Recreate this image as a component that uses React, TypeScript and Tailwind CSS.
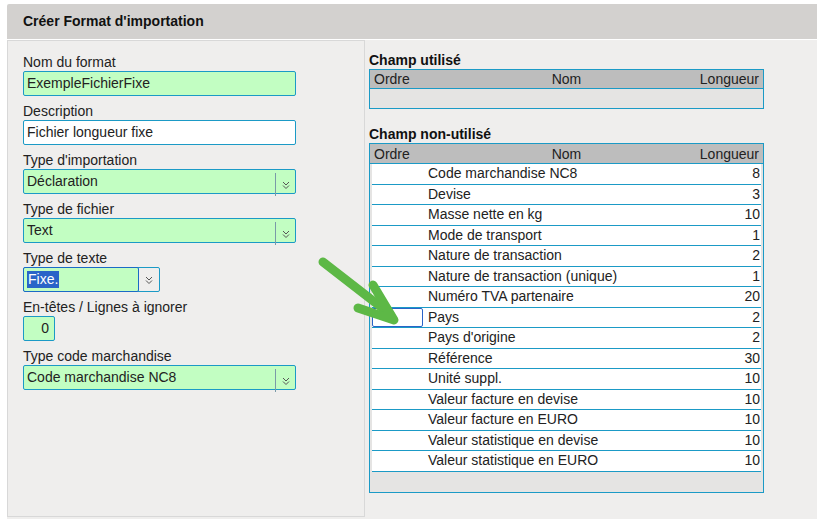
import React from "react";

const rows: [string, number][] = [
  ["Code marchandise NC8", 8],
  ["Devise", 3],
  ["Masse nette en kg", 10],
  ["Mode de transport", 1],
  ["Nature de transaction", 2],
  ["Nature de transaction (unique)", 1],
  ["Numéro TVA partenaire", 20],
  ["Pays", 2],
  ["Pays d'origine", 2],
  ["Référence", 30],
  ["Unité suppl.", 10],
  ["Valeur facture en devise", 10],
  ["Valeur facture en EURO", 10],
  ["Valeur statistique en devise", 10],
  ["Valeur statistique en EURO", 10],
];

function Chev() {
  return (
    <div className="w-[20px] h-full flex items-center justify-center border-l border-[#7a9aa8] my-[3px]">
      <svg width="10" height="10" viewBox="0 0 10 10" fill="none" stroke="#555" strokeWidth="1">
        <path d="M2 2 L5 5 L8 2 M2 5.5 L5 8.5 L8 5.5" />
      </svg>
    </div>
  );
}

function Field({ label, children }: { label: string; children: React.ReactNode }) {
  return (
    <div className="flex flex-col">
      <div className="h-[18px] leading-[18px] text-[14px] text-[#222]">{label}</div>
      {children}
    </div>
  );
}

function Sel({ value, w }: { value: string; w: string }) {
  return (
    <div className={`${w} h-[25px] bg-[#c2fec2] border border-[#1b9ac6] rounded-[2px] flex items-stretch`}>
      <div className="flex-1 flex items-center pl-[3px]">
        <span>{value}</span>
      </div>
      <Chev />
    </div>
  );
}

export default function App() {
  return (
    <div className="w-[817px] h-[523px] bg-white relative overflow-hidden text-[14px] text-[#222]" style={{ fontFamily: '"Liberation Sans", Arial, sans-serif' }}>
      <div className="absolute left-[7px] right-0 top-[4px] h-[35px] bg-[#d3d1cf] rounded-tl-[2px] flex items-center pl-[16px] font-bold text-[14px] text-[#111]">
        Créer Format d'importation
      </div>
      <div className="absolute left-[7px] right-0 top-[40px] bottom-[4px] bg-[#efeeed] flex">
        <div className="w-[358px] h-[477px] border border-[#d8d8d8] bg-[#efeeed] pt-[12px] pl-[15px] flex flex-col gap-[6px]">
          <Field label="Nom du format">
            <div className="w-[273px] h-[25px] bg-[#c2fec2] border border-[#1b9ac6] rounded-[2px] flex items-center pl-[3px]">ExempleFichierFixe</div>
          </Field>
          <Field label="Description">
            <div className="w-[273px] h-[25px] bg-white border border-[#1b9ac6] rounded-[2px] flex items-center pl-[3px]">Fichier longueur fixe</div>
          </Field>
          <Field label="Type d'importation">
            <Sel value="Déclaration" w="w-[273px]" />
          </Field>
          <Field label="Type de fichier">
            <Sel value="Text" w="w-[273px]" />
          </Field>
          <Field label="Type de texte">
            <div className="w-[137px] h-[25px] border border-[#1b9ac6] rounded-[2px] flex items-stretch bg-[#efeeed]">
              <div className="flex-1 bg-[#c2fec2] border border-[#1b6ac6] rounded-[2px] flex items-center pl-[3px] -m-[1px] mr-0">
                <span className="bg-[#2a64c8] text-white leading-[17px] px-[1px]">Fixe.</span>
              </div>
              <div className="w-[20px] flex items-center justify-center">
                <svg width="10" height="10" viewBox="0 0 10 10" fill="none" stroke="#555" strokeWidth="1">
                  <path d="M2 2 L5 5 L8 2 M2 5.5 L5 8.5 L8 5.5" />
                </svg>
              </div>
            </div>
          </Field>
          <Field label="En-têtes / Lignes à ignorer">
            <div className="w-[32px] h-[25px] bg-[#c2fec2] border border-[#1b9ac6] rounded-[2px] flex items-center justify-end pr-[5px]">0</div>
          </Field>
          <Field label="Type code marchandise">
            <Sel value="Code marchandise NC8" w="w-[273px]" />
          </Field>
        </div>
        <div className="pl-[4px] pt-[11px] flex flex-col">
          <div className="font-bold h-[18px] leading-[18px] text-[#111]">Champ utilisé</div>
          <div className="w-[395px] border border-[#1b9ac6] bg-[#e5e4e3]">
            <div className="h-[19px] bg-[#bdbdbd] border-b border-[#1b9ac6] grid grid-cols-[120px_1fr_120px] px-[4px] items-center leading-[18px]">
              <span>Ordre</span><span className="text-center">Nom</span><span className="text-right">Longueur</span>
            </div>
            <div className="h-[19px]" />
          </div>
          <div className="font-bold h-[18px] leading-[18px] mt-[16px] text-[#111]">Champ non-utilisé</div>
          <div className="w-[395px] border border-[#1b9ac6] bg-[#e5e4e3]">
            <div className="h-[20px] bg-[#bdbdbd] border-b border-[#1b9ac6] grid grid-cols-[120px_1fr_120px] px-[4px] items-center leading-[18px]">
              <span>Ordre</span><span className="text-center">Nom</span><span className="text-right">Longueur</span>
            </div>
            <div className="px-[2px]">
              {rows.map(([n, l]) => (
                <div key={n} className="h-[20.5px] bg-white border-b border-[#1b9ac6] flex items-center">
                  {n === "Pays" ? (
                    <div className="w-[51px] h-[19px] border border-[#2a64c8] rounded-[2px] mr-[5px]" />
                  ) : (
                    <div className="w-[56px]" />
                  )}
                  <span className="flex-1">{n}</span>
                  <span className="pr-[1px]">{l}</span>
                </div>
              ))}
            </div>
            <div className="h-[20px]" />
          </div>
        </div>
      </div>
      <svg className="absolute left-[310px] top-[250px]" width="100" height="90" viewBox="0 0 100 90">
        <path d="M13 12 L80 64" stroke="#5db846" strokeWidth="9" strokeLinecap="round" fill="none" />
        <path d="M63 35 L84 70 L48 58" stroke="#5db846" strokeWidth="9" strokeLinecap="round" strokeLinejoin="round" fill="none" />
      </svg>
    </div>
  );
}
